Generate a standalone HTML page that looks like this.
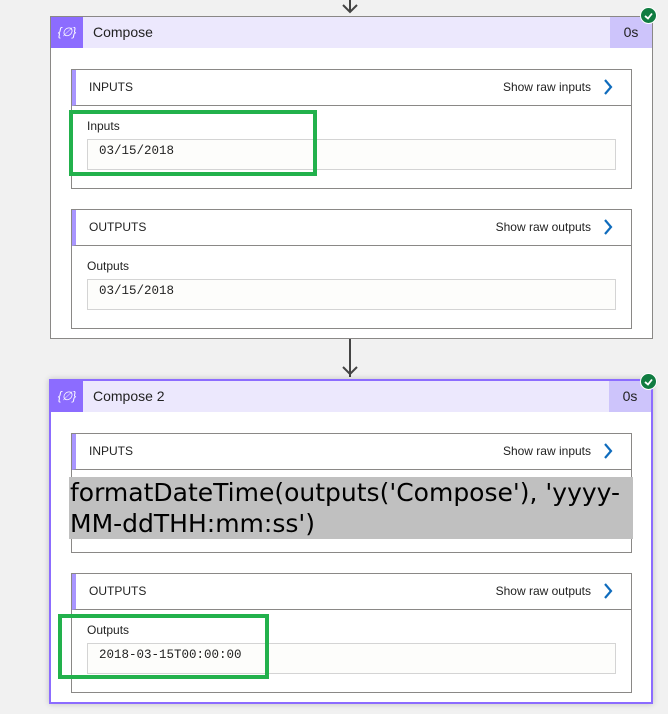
<!DOCTYPE html>
<html><head><meta charset="utf-8"><style>
*{box-sizing:border-box;margin:0;padding:0}
body{width:668px;height:714px;background:#f1f1f1;position:relative;overflow:hidden;font-family:"Segoe UI","Liberation Sans",sans-serif;color:#222}
.a{position:absolute}
.card{position:absolute;background:#fff;border:1px solid #8a8886}
.hdr{position:absolute;left:0;right:0;top:0;height:31px;background:#ece8fd}
.ic{position:absolute;left:0;top:0;width:32px;height:31px;background:#8c6cff;color:#fff;font-size:12px;text-align:center;line-height:30px;font-style:italic}
.tt{position:absolute;left:42px;top:7px;font-size:14px;color:#222}
.tm{position:absolute;right:0;top:0;width:42px;height:31px;background:#cdc4fb;font-size:14px;text-align:center;line-height:31px}
.sec{position:absolute;border:1px solid #8a8886;background:#fff}
.sh{position:absolute;left:0;right:0;top:0;height:36px;border-bottom:1px solid #8a8886;border-left:4px solid #a996ff}
.sh .l{position:absolute;left:13px;top:10px;font-size:12px}
.sh .r{position:absolute;right:40px;top:10px;font-size:12px}
.sh svg{position:absolute;right:18px;top:9px}
.lab{position:absolute;left:15px;font-size:12px}
.fld{position:absolute;left:15px;right:15px;height:31px;border:1px solid #d4d4d4;background:#fdfdfb;font-family:"Liberation Mono",monospace;font-size:12.5px;padding:4px 0 0 11px}
.chk{position:absolute;width:17px;height:17px;border-radius:50%;background:#107c41;border:1px solid #fff}
.gb{position:absolute;border:4px solid #22b14c}
</style></head><body>
<div class="a" style="left:349px;top:0;width:2px;height:12px;background:#444"></div>
<svg class="a" style="left:341px;top:0" width="18" height="16"><path d="M2 5 L9 12 L16 5" stroke="#444" stroke-width="2" fill="none"/></svg>

<div class="card" style="left:50px;top:16px;width:603px;height:323px">
 <div class="hdr"><div class="ic">{∅}</div><div class="tt">Compose</div><div class="tm">0s</div></div>
 <div class="sec" style="left:20px;top:52px;width:561px;height:120px">
  <div class="sh"><span class="l">INPUTS</span><span class="r">Show raw inputs</span><svg width="10" height="16"><path d="M2 1 L8 8 L2 15" stroke="#0f6cbd" stroke-width="2.2" fill="none"/></svg></div>
  <div class="lab" style="top:49px">Inputs</div>
  <div class="fld" style="top:69px">03/15/2018</div>
 </div>
 <div class="sec" style="left:20px;top:192px;width:561px;height:120px">
  <div class="sh"><span class="l">OUTPUTS</span><span class="r">Show raw outputs</span><svg width="10" height="16"><path d="M2 1 L8 8 L2 15" stroke="#0f6cbd" stroke-width="2.2" fill="none"/></svg></div>
  <div class="lab" style="top:49px">Outputs</div>
  <div class="fld" style="top:69px">03/15/2018</div>
 </div>
</div>
<div class="chk" style="left:640px;top:7px"><svg width="15" height="15"><path d="M4 8 L7 10.5 L11 5.5" stroke="#fff" stroke-width="1.8" fill="none"/></svg></div>
<div class="gb" style="left:69px;top:110px;width:248px;height:66px"></div>

<div class="a" style="left:349px;top:339px;width:2px;height:38px;background:#444"></div>
<svg class="a" style="left:341px;top:362px" width="18" height="16"><path d="M2 5 L9 12 L16 5" stroke="#444" stroke-width="2" fill="none"/></svg>

<div class="card" style="left:49px;top:379px;width:604px;height:325px;border:2px solid #8c6cff;box-shadow:0 0 6px rgba(0,0,0,.2)">
 <div class="hdr"><div class="ic">{∅}</div><div class="tt">Compose 2</div><div class="tm">0s</div></div>
 <div class="sec" style="left:20px;top:52px;width:561px;height:120px">
  <div class="sh"><span class="l">INPUTS</span><span class="r">Show raw inputs</span><svg width="10" height="16"><path d="M2 1 L8 8 L2 15" stroke="#0f6cbd" stroke-width="2.2" fill="none"/></svg></div>
 </div>
 <div class="sec" style="left:20px;top:192px;width:561px;height:120px">
  <div class="sh"><span class="l">OUTPUTS</span><span class="r">Show raw outputs</span><svg width="10" height="16"><path d="M2 1 L8 8 L2 15" stroke="#0f6cbd" stroke-width="2.2" fill="none"/></svg></div>
  <div class="lab" style="top:49px">Outputs</div>
  <div class="fld" style="top:69px">2018-03-15T00:00:00</div>
 </div>
</div>
<div class="a" style="left:69px;top:477px;width:564px;height:62px;background:#c0c0c0;font-family:'DejaVu Sans',sans-serif;font-size:25px;line-height:31px;color:#000;padding-left:1px;white-space:nowrap">formatDateTime(outputs('Compose'), 'yyyy-<br>MM-ddTHH:mm:ss')</div>
<div class="chk" style="left:640px;top:373px"><svg width="15" height="15"><path d="M4 8 L7 10.5 L11 5.5" stroke="#fff" stroke-width="1.8" fill="none"/></svg></div>
<div class="gb" style="left:58px;top:614px;width:211px;height:65px"></div>
</body></html>
